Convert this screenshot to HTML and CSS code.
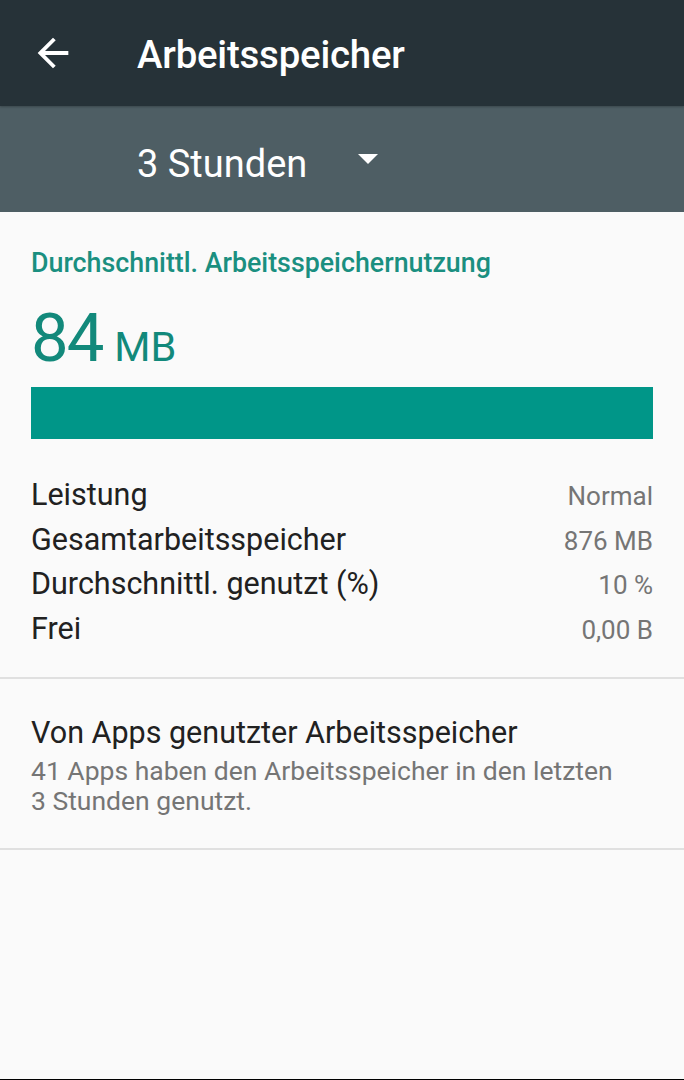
FILE: index.html
```html
<!DOCTYPE html>
<html lang="de">
<head>
<meta charset="utf-8">
<title>Arbeitsspeicher</title>
<link rel="stylesheet" href="styles.css">
</head>
<body>
<div class="screen">
  <header class="toolbar">
    <span class="back">
      <svg viewBox="0 0 24 24" width="46" height="46"><path fill="#fff" d="M20 11H7.83l5.59-5.59L12 4l-8 8 8 8 1.41-1.41L7.83 13H20v-2z"/></svg>
    </span>
    <h1 class="title">Arbeitsspeicher</h1>
  </header>
  <div class="subbar">
    <span class="period">3 Stunden</span>
    <span class="drop">
      <svg viewBox="0 0 24 24" width="48" height="48"><path fill="#fff" d="M7 10l5 5 5-5z"/></svg>
    </span>
  </div>
  <main class="content">
    <section class="usage">
      <div class="label">Durchschnittl. Arbeitsspeichernutzung</div>
      <div class="amount"><span class="num">84</span><span class="unit">MB</span></div>
      <div class="bar"></div>
      <div class="rows">
        <div class="row"><span class="k">Leistung</span><span class="v">Normal</span></div>
        <div class="row"><span class="k">Gesamtarbeitsspeicher</span><span class="v">876 MB</span></div>
        <div class="row"><span class="k">Durchschnittl. genutzt (%)</span><span class="v">10 %</span></div>
        <div class="row"><span class="k">Frei</span><span class="v">0,00 B</span></div>
      </div>
    </section>
    <section class="apps">
      <div class="apps-title">Von Apps genutzter Arbeitsspeicher</div>
      <div class="apps-sub">41 Apps haben den Arbeitsspeicher in den letzten<br>3 Stunden genutzt.</div>
    </section>
  </main>
</div>
</body>
</html>
```
FILE: styles.css
```css
html, body {
  margin: 0;
  padding: 0;
  background: #000;
}
body {
  font-family: Roboto, "Liberation Sans", sans-serif;
}
.screen {
  width: 684px;
  height: 1079px;
  background: #fafafa;
  display: flex;
  flex-direction: column;
  overflow: hidden;
}
.toolbar {
  height: 106px;
  background: #263238;
  display: flex;
  align-items: center;
  padding-top: 3px;
  box-sizing: border-box;
  position: relative;
  z-index: 1;
  box-shadow: 0 1px 2px rgba(0,0,0,0.25);
}
.back {
  width: 46px;
  height: 46px;
  margin-left: 30px;
  margin-top: -4px;
  display: flex;
}
.title {
  margin: 0 0 0 61px;
  font-size: 38.4px;
  font-weight: 500;
  color: #fff;
  letter-spacing: -0.2px;
}
.subbar {
  height: 106px;
  background: #4e5e64;
  display: flex;
  align-items: center;
  padding-top: 10px;
  box-sizing: border-box;
}
.period {
  margin-left: 137px;
  font-size: 38px;
  color: #fff;
}
.drop {
  width: 48px;
  height: 48px;
  margin-left: 37px;
  margin-top: -12px;
  display: flex;
}
.content {
  flex: 1;
}
.usage {
  padding: 35px 31px 26px;
  border-bottom: 2px solid #e0e0e0;
}
.label {
  font-size: 26.8px;
  line-height: 32px;
  font-weight: 500;
  color: #1a8f80;
}
.amount {
  margin-top: 24px;
  line-height: 70px;
  height: 70px;
  color: #12897b;
  white-space: nowrap;
}
.num {
  font-size: 67px;
  letter-spacing: -2px;
}
.unit {
  font-size: 41.5px;
  margin-left: 12px;
}
.bar {
  margin-top: 14px;
  height: 52px;
  background: #009688;
}
.rows {
  margin-top: 34px;
}
.row {
  display: flex;
  justify-content: space-between;
  align-items: baseline;
  height: 44.5px;
  line-height: 44px;
}
.k {
  font-size: 30.5px;
  color: #212121;
}
.v {
  font-size: 26px;
  color: #757575;
}
.apps {
  padding: 36px 31px 32px;
  border-bottom: 2px solid #e0e0e0;
}
.apps-title {
  font-size: 30.5px;
  line-height: 36px;
  color: #212121;
}
.apps-sub {
  margin-top: 5px;
  font-size: 26.5px;
  line-height: 30px;
  color: #757575;
}
```
